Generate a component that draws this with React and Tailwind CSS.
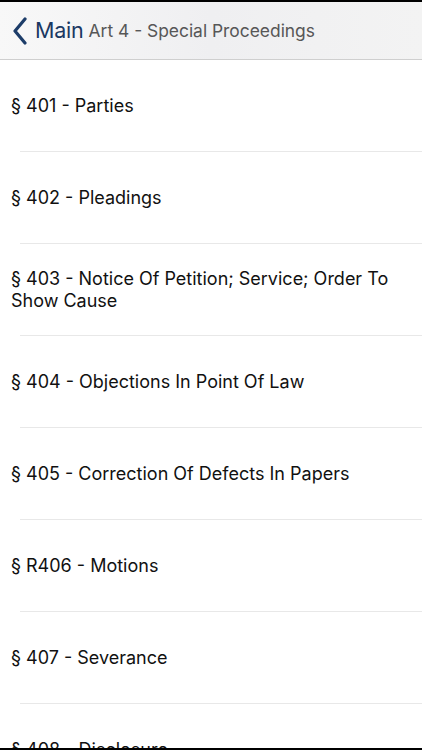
import React from 'react';

const sections = [
    '§ 401 - Parties',
    '§ 402 - Pleadings',
    '§ 403 - Notice Of Petition; Service; Order To Show Cause',
    '§ 404 - Objections In Point Of Law',
    '§ 405 - Correction Of Defects In Papers',
    '§ R406 - Motions',
    '§ 407 - Severance',
    '§ 408 - Disclosure',
];

const SectionRow = ({ title }) => (
    <div className="relative h-[92px] shrink-0 flex items-center pl-[11px] pr-6">
        <span className="text-[18px] leading-[22px] text-[#111]">{title}</span>
        <div className="absolute left-[20px] right-0 bottom-0 h-px bg-[#e8e8e8]" />
    </div>
);

export default function App() {
    return (
        <div
            className="w-[422px] h-[750px] flex flex-col bg-white overflow-hidden"
            style={{ fontFamily: 'Inter, "Noto Sans", sans-serif' }}
        >
            <div className="h-[2px] bg-black shrink-0" />
            <div className="h-[58px] shrink-0 flex items-center bg-gradient-to-r from-[#f8f8f8] via-[#efeff1] to-[#f3f3f3] border-b border-[#cfcfcf]">
                <svg width="16" height="28" viewBox="0 0 16 28" className="ml-[12px] mt-[1px]">
                    <path d="M13 2 L3 14 L13 26" fill="none" stroke="#1d3d69" strokeWidth="3.2" strokeLinecap="round" strokeLinejoin="round" />
                </svg>
                <span className="ml-[7px] text-[21.5px] text-[#1a3862] tracking-[-0.2px]">Main</span>
                <span className="ml-[5px] text-[17.4px] text-[#575757] mt-[1px]">Art 4 - Special Proceedings</span>
            </div>
            <div className="flex-1 flex flex-col overflow-hidden">
                {sections.map((s) => (
                    <SectionRow key={s} title={s} />
                ))}
            </div>
            <div className="h-[2px] bg-black shrink-0" />
        </div>
    );
}
